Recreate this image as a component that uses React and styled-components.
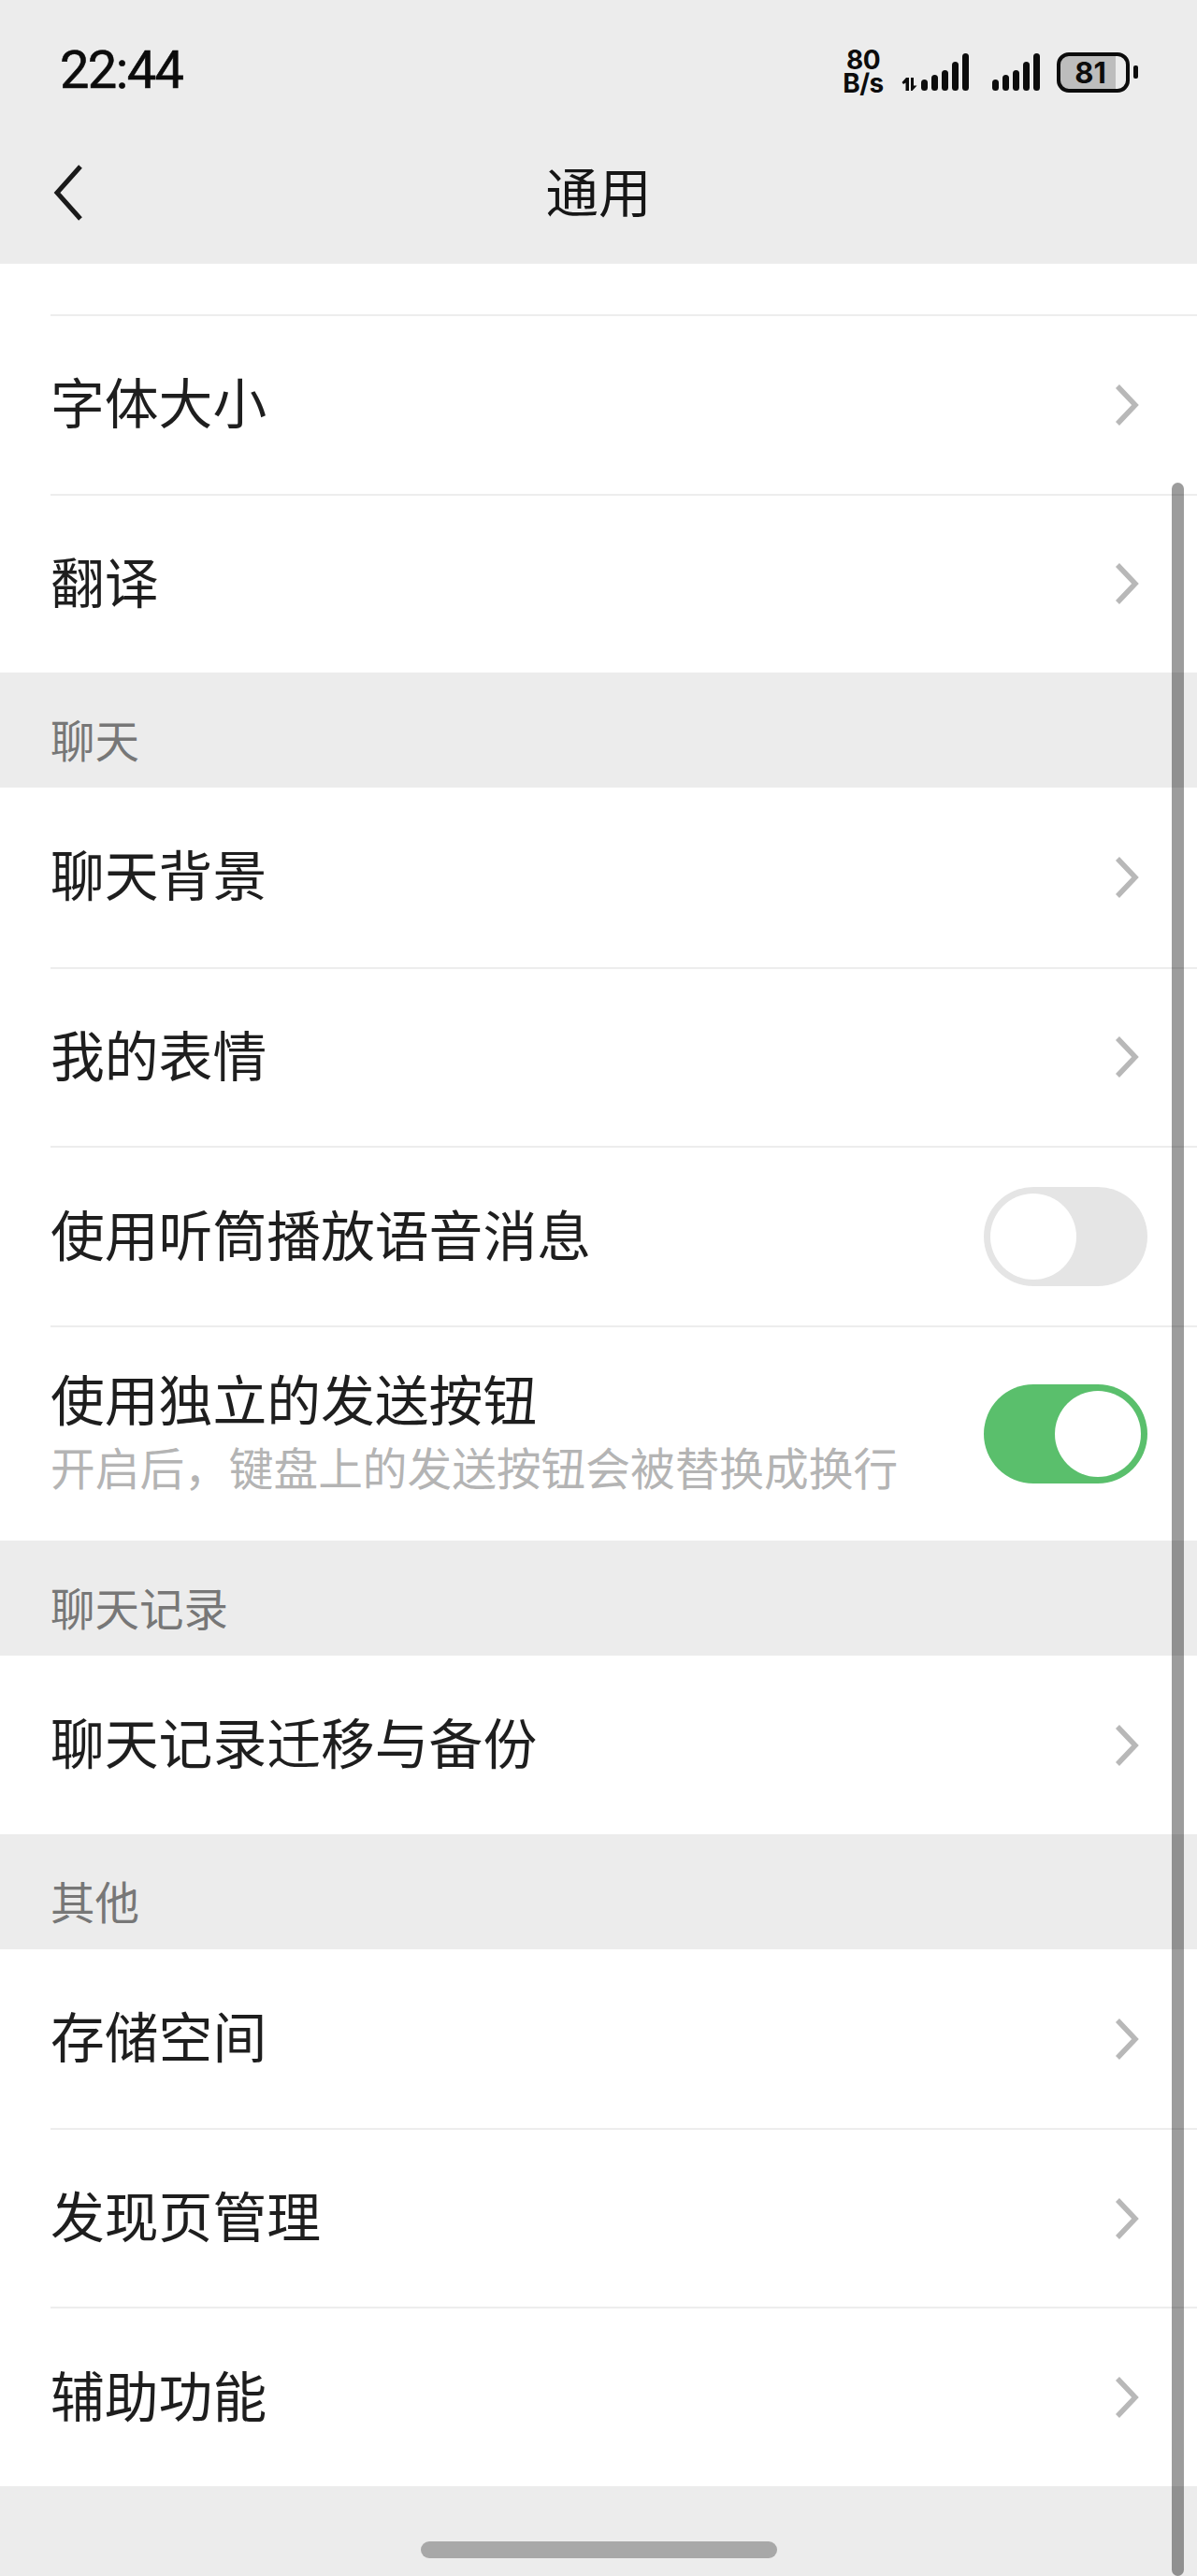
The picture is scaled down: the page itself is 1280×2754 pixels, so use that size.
import React from "react";
import styled, { createGlobalStyle } from "styled-components";

const GlobalStyle = createGlobalStyle`
  html, body {
    margin: 0;
    padding: 0;
    background: #ffffff;
  }
  * {
    box-sizing: border-box;
  }
  body {
    font-family: "Noto Sans CJK SC", "Noto Sans", sans-serif;
  }
`;

const Phone = styled.div`
  position: relative;
  width: 1280px;
  height: 2754px;
  overflow: hidden;
  display: flex;
  flex-direction: column;
  background: #ffffff;
`;

const Header = styled.header`
  background: #ececec;
  height: 282px;
  flex: none;
`;

const StatusBar = styled.div`
  height: 130px;
  padding: 20px 63px 0 64px;
  display: flex;
  align-items: center;
  justify-content: space-between;
`;

const Clock = styled.span`
  font-family: Roboto, "Liberation Sans", sans-serif;
  font-size: 56px;
  font-weight: 400;
  letter-spacing: -1.6px;
  line-height: 1;
  color: #0c0c0c;
  -webkit-text-stroke: 0.6px #0c0c0c;
`;

const StatusIcons = styled.div`
  display: flex;
  align-items: center;
  margin-top: 4px;
`;

const Speed = styled.div`
  width: 40px;
  margin-right: 21px;
  font-family: Inter, "Liberation Sans", sans-serif;
  font-weight: 700;
  text-align: center;
  color: #0c0c0c;
  white-space: nowrap;
  display: flex;
  flex-direction: column;
  align-items: center;
`;

const SpeedLine = styled.span`
  font-size: 28px;
  line-height: 25px;
  letter-spacing: -0.5px;
`;

const SignalIcon = styled.svg`
  display: block;
  flex: none;
  margin-right: ${(p) => p.$gap}px;
`;

const Battery = styled.div`
  width: 78px;
  height: 43px;
  border: 4px solid #0c0c0c;
  border-radius: 13px;
  background: linear-gradient(to right, #bdbdbd 0 84%, #ececec 84% 100%);
  display: flex;
  align-items: center;
  justify-content: center;
  font-family: Inter, "Liberation Sans", sans-serif;
  font-size: 31px;
  font-weight: 700;
  line-height: 1;
  color: #0c0c0c;
  padding-right: 6px;
`;

const BatteryNub = styled.div`
  width: 5px;
  height: 14px;
  margin-left: 4px;
  border-radius: 2px;
  background: #0c0c0c;
`;

const NavBar = styled.div`
  position: relative;
  height: 152px;
  display: flex;
  align-items: center;
  justify-content: center;
`;

const BackIcon = styled.svg`
  position: absolute;
  left: 56px;
  top: 45px;
`;

const Title = styled.h1`
  margin: -7px 0 0;
  font-size: 56.5px;
  font-weight: 400;
  line-height: 1;
  color: #161616;
`;

const List = styled.main`
  flex: 1;
  display: flex;
  flex-direction: column;
`;

const TopGap = styled.div`
  height: 54px;
  flex: none;
`;

const GroupLabel = styled.div`
  height: 123px;
  flex: none;
  background: #ececec;
  padding: 46px 0 0 54px;
  font-size: 47.5px;
  line-height: 50px;
  color: #777777;
`;

const Row = styled.div`
  padding-left: ${(p) => (p.$flush ? 0 : 54)}px;
  flex: none;
`;

const RowInner = styled.div`
  height: ${(p) => p.$height}px;
  padding-left: ${(p) => (p.$flush ? 54 : 0)}px;
  border-top: ${(p) => (p.$flush ? "none" : "2px solid #ededed")};
  display: flex;
  align-items: center;
  justify-content: space-between;
`;

const RowLabel = styled.span`
  font-size: 57.8px;
  line-height: 1;
  padding-bottom: 7px;
  color: #1e1e1e;
  white-space: nowrap;
`;

const LabelStack = styled.div`
  display: flex;
  flex-direction: column;
  gap: 20px;
  margin-top: -8px;
`;

const StackTitle = styled(RowLabel)`
  padding-bottom: 0;
`;

const Hint = styled.span`
  font-size: 47.7px;
  line-height: 1;
  color: #b4b4b4;
  white-space: nowrap;
`;

const ChevronIcon = styled.svg`
  flex: none;
  margin-right: 59px;
`;

const Switch = styled.div`
  flex: none;
  width: 175px;
  height: 106px;
  margin-right: 53px;
  padding: 7px;
  border-radius: 53px;
  display: flex;
  justify-content: ${(p) => (p.$on ? "flex-end" : "flex-start")};
  background: ${(p) => (p.$on ? "#5abf6c" : "#e5e5e5")};
`;

const Knob = styled.div`
  width: 92px;
  height: 92px;
  border-radius: 50%;
  background: #ffffff;
`;

const Footer = styled.footer`
  flex: 1;
  background: #ececec;
  display: flex;
  justify-content: center;
  padding-top: 59px;
`;

const HomeBar = styled.div`
  width: 381px;
  height: 18px;
  border-radius: 9px;
  background: #a8a8a8;
`;

const ScrollThumb = styled.div`
  position: absolute;
  left: 1253px;
  top: 516px;
  width: 13px;
  bottom: 0;
  border-radius: 7px;
  background: rgba(0, 0, 0, 0.39);
`;

const Chevron = () => (
  <ChevronIcon width="30" height="48" viewBox="0 0 30 48" fill="none">
    <path d="M4 4 L23 24 L4 44" stroke="#b8b8b8" strokeWidth="5.5" strokeLinejoin="miter" />
  </ChevronIcon>
);

const Bars = ({ gap, arrows }) => (
  <SignalIcon $gap={gap} width={arrows ? 72 : 52} height="42" viewBox={arrows ? "0 0 72 42" : "0 0 52 42"}>
    {arrows && (
      <path
        d="M0.5 32 L5 27 H8 V41 H4.5 V32.5 L2 34 Z M10 27 H13 V35.5 L16.5 35.5 L11.5 41 H10 Z"
        fill="#0c0c0c"
      />
    )}
    <g fill="#0c0c0c" transform={arrows ? "translate(21 0)" : undefined}>
      <rect x="0" y="29" width="7" height="12" rx="3.5" />
      <rect x="11" y="24" width="7" height="17" rx="3.5" />
      <rect x="22" y="19" width="7" height="22" rx="3.5" />
      <rect x="33" y="10" width="7" height="31" rx="3.5" />
      <rect x="44" y="1" width="7" height="40" rx="3.5" />
    </g>
  </SignalIcon>
);

const ArrowRow = ({ label, flush, height = 191.5 }) => (
  <Row $flush={flush}>
    <RowInner $height={height} $flush={flush}>
      <RowLabel>{label}</RowLabel>
      <Chevron />
    </RowInner>
  </Row>
);

export default function App() {
  return (
    <Phone>
      <GlobalStyle />
      <Header>
        <StatusBar>
          <Clock>22:44</Clock>
          <StatusIcons>
            <Speed>
              <SpeedLine>80</SpeedLine>
              <SpeedLine>B/s</SpeedLine>
            </Speed>
            <Bars gap={25} arrows />
            <Bars gap={17} />
            <Battery>81</Battery>
            <BatteryNub />
          </StatusIcons>
        </StatusBar>
        <NavBar>
          <BackIcon width="34" height="62" viewBox="0 0 34 62" fill="none">
            <path d="M30 3 L5 31 L30 59" stroke="#1a1a1a" strokeWidth="5" />
          </BackIcon>
          <Title>通用</Title>
        </NavBar>
      </Header>
      <List>
        <TopGap />
        <ArrowRow label="字体大小" />
        <ArrowRow label="翻译" />
        <GroupLabel>聊天</GroupLabel>
        <ArrowRow label="聊天背景" flush />
        <ArrowRow label="我的表情" />
        <Row>
          <RowInner $height={192}>
            <RowLabel>使用听筒播放语音消息</RowLabel>
            <Switch>
              <Knob />
            </Switch>
          </RowInner>
        </Row>
        <Row>
          <RowInner $height={230}>
            <LabelStack>
              <StackTitle>使用独立的发送按钮</StackTitle>
              <Hint>开启后，键盘上的发送按钮会被替换成换行</Hint>
            </LabelStack>
            <Switch $on>
              <Knob />
            </Switch>
          </RowInner>
        </Row>
        <GroupLabel>聊天记录</GroupLabel>
        <ArrowRow label="聊天记录迁移与备份" flush height={191} />
        <GroupLabel>其他</GroupLabel>
        <ArrowRow label="存储空间" flush height={191} />
        <ArrowRow label="发现页管理" height={191} />
        <ArrowRow label="辅助功能" height={192} />
        <Footer>
          <HomeBar />
        </Footer>
      </List>
      <ScrollThumb />
    </Phone>
  );
}
